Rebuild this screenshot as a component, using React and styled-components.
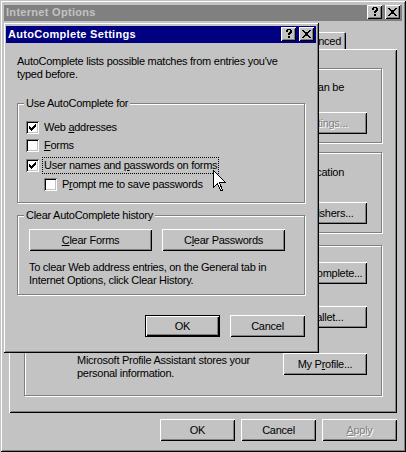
import React from "react";
import styled, { createGlobalStyle, css } from "styled-components";

const GlobalStyle = createGlobalStyle`
  body {
    margin: 0;
    background: #c0c0c0;
    overflow: hidden;
  }
  * {
    box-sizing: border-box;
  }
`;

const face = "#c3c3c3";
const shadow = "#808080";

const raised = css`
  box-shadow: inset 1px 1px 0 #fff, inset -1px -1px 0 #000,
    inset 2px 2px 0 ${face}, inset -2px -2px 0 ${shadow};
`;

const frame = css`
  box-shadow: inset 1px 1px 0 ${face}, inset -1px -1px 0 #000,
    inset 2px 2px 0 #fff, inset -2px -2px 0 ${shadow};
`;

const etched = css`
  border: 1px solid ${shadow};
  box-shadow: inset 1px 1px 0 #fff, 1px 1px 0 #fff;
`;

const Window = styled.div`
  position: relative;
  width: 406px;
  height: 452px;
  padding: 5px 4px 4px;
  background: ${face};
  color: #000;
  font-family: "Liberation Sans", Arial, sans-serif;
  font-size: 11px;
  line-height: 13px;
  letter-spacing: -0.27px;
  overflow: hidden;
  ${frame}
`;

const Dialog = styled.div`
  position: absolute;
  left: 3px;
  top: 22px;
  width: 316px;
  height: 331px;
  padding: 4px 3px 3px;
  background: ${face};
  ${frame}
`;

const TitleBar = styled.div`
  display: flex;
  align-items: flex-start;
  height: ${(p) => (p.$active ? "17px" : "16px")};
  padding: ${(p) => (p.$active ? "1px" : "0")} 2px 0 2px;
  gap: 3px;
  background: ${(p) => (p.$active ? "#000080" : shadow)};
  color: ${(p) => (p.$active ? "#fff" : face)};
  font-size: 11px;
  font-weight: bold;
  letter-spacing: 0.3px;
`;

const TitleText = styled.div`
  flex: 1;
  align-self: center;
  padding-bottom: 2px;
`;

const CaptionButton = styled.div`
  display: flex;
  align-items: center;
  justify-content: center;
  width: 15px;
  height: 14px;
  background: ${face};
  ${raised}
`;

const TabStrip = styled.div`
  display: flex;
  justify-content: flex-end;
  height: 17px;
  margin-top: 11px;
  padding-right: 56px;
`;

const Tab = styled.div`
  padding: 3px 5px 0 6px;
  background: ${face};
  border-radius: 2px 2px 0 0;
  box-shadow: inset 1px 1px 0 #fff, inset -1px 0 0 #000, inset -2px 0 0 ${shadow};
`;

const TabPage = styled.div`
  display: flex;
  flex-direction: column;
  width: 388px;
  height: 364px;
  margin-left: 5px;
  padding: 19px 15px 0;
  ${raised}
`;

const Group = styled.section`
  height: ${(p) => p.$height}px;
  margin-top: ${(p) => p.$gap || 0}px;
  padding: ${(p) => p.$top}px 14px 0 52px;
  ${etched}
`;

const CutLine = styled.div`
  margin-right: 23px;
  text-align: right;
`;

const ButtonRow = styled.div`
  display: flex;
  justify-content: flex-end;
  margin-top: ${(p) => p.$top || 0}px;
`;

const ProfileRow = styled.div`
  display: flex;
  justify-content: space-between;
  margin-top: 25px;
`;

const ProfileText = styled.div`
  padding-top: 1px;
`;

const Button = styled.div`
  flex-shrink: 0;
  width: ${(p) => p.$width}px;
  height: 22px;
  line-height: 22px;
  text-align: center;
  background: ${face};
  ${(p) =>
    p.$default
      ? css`
          box-shadow: inset 0 0 0 1px #000, inset 2px 2px 0 #fff,
            inset -2px -2px 0 #000, inset -3px -3px 0 ${shadow};
        `
      : raised}
  ${(p) =>
    p.$disabled &&
    css`
      color: ${shadow};
      text-shadow: 1px 1px 0 #fff;
    `}
`;

const PageButtons = styled.div`
  display: flex;
  justify-content: flex-end;
  gap: 6px;
  margin: 6px 5px 0 0;
`;

const DialogBody = styled.div`
  display: flex;
  flex-direction: column;
  padding: 12px 11px 0;
`;

const Intro = styled.p`
  margin: 0 0 16px;
`;

const DialogGroup = styled.fieldset`
  height: ${(p) => p.$height}px;
  margin: 0 0 ${(p) => p.$after || 0}px;
  padding: 0 12px 0 8px;
  min-width: 0;
  ${etched}
`;

const Legend = styled.legend`
  margin-left: -2px;
  padding: 0 2px;
  background: ${face};
`;

const CheckRow = styled.div`
  display: flex;
  align-items: center;
  height: 13px;
  gap: 5px;
  margin-top: ${(p) => p.$top}px;
  margin-left: ${(p) => p.$indent || 0}px;
`;

const CheckBox = styled.div`
  display: flex;
  align-items: center;
  justify-content: center;
  flex-shrink: 0;
  width: 13px;
  height: 13px;
  background: #fff;
  box-shadow: inset 1px 1px 0 ${shadow}, inset -1px -1px 0 #fff,
    inset 2px 2px 0 #000, inset -2px -2px 0 ${face};
`;

const FocusLabel = styled.span`
  display: block;
  margin-left: -1px;
  padding: 1px;
  outline: 1px dotted #000;
`;

const ClearButtons = styled.div`
  display: flex;
  gap: 10px;
  margin-top: 7px;
  padding-left: 3px;
`;

const Note = styled.p`
  margin: 10px 0 0 3px;
`;

const DialogActions = styled.div`
  display: flex;
  justify-content: flex-end;
  gap: 10px;
  margin-top: 20px;
`;

const Pointer = styled.svg`
  position: absolute;
  left: 213px;
  top: 170px;
`;

const Help = () => (
  <svg width="8" height="10" viewBox="0 0 8 10" shapeRendering="crispEdges">
    <path d="M1 1h1v-1h4v1h1v3h-1v1h-1v1h-2v-2h1v-1h1v-2h-2v2h-2zM3 7h2v2h-2z" fill="#000" />
  </svg>
);

const Close = () => (
  <svg width="9" height="8" viewBox="0 0 9 8" shapeRendering="crispEdges">
    <path d="M0 0h2v1h1v1h3v-1h1v-1h2v1h-1v1h-1v1h-1v2h1v1h1v1h1v1h-2v-1h-1v-1h-3v1h-1v1h-2v-1h1v-1h1v-1h1v-2h-1v-1h-1v-1h-1z" fill="#000" />
  </svg>
);

const Check = () => (
  <svg width="7" height="7" viewBox="0 0 7 7" shapeRendering="crispEdges">
    <path d="M6 0h1v3h-1v1h-1v1h-1v1h-1v1h-1v-1h-1v-1h-1v-3h1v1h1v1h1v-1h1v-1h1v-1h1z" fill="#000" />
  </svg>
);

const Caption = ({ active, children }) => (
  <TitleBar $active={active}>
    <TitleText>{children}</TitleText>
    <CaptionButton><Help /></CaptionButton>
    <CaptionButton><Close /></CaptionButton>
  </TitleBar>
);

const Option = ({ checked, top, indent, children }) => (
  <CheckRow $top={top} $indent={indent}>
    <CheckBox>{checked && <Check />}</CheckBox>
    <span>{children}</span>
  </CheckRow>
);

export default function App() {
  return (
    <>
      <GlobalStyle />
      <Window>
        <Caption>Internet Options</Caption>
        <TabStrip>
          <Tab>Advanced</Tab>
        </TabStrip>
        <TabPage>
          <Group $height={75} $top={12}>
            <CutLine>can be</CutLine>
            <ButtonRow $top={18}>
              <Button $width={84} $disabled>Settings...</Button>
            </ButtonRow>
          </Group>
          <Group $height={81} $gap={9} $top={13}>
            <CutLine>certification</CutLine>
            <ButtonRow $top={23}>
              <Button $width={84}>Publishers...</Button>
            </ButtonRow>
          </Group>
          <Group $height={151} $gap={12} $top={16}>
            <ButtonRow>
              <Button $width={84}>AutoComplete...</Button>
            </ButtonRow>
            <ButtonRow $top={22}>
              <Button $width={84}>Wallet...</Button>
            </ButtonRow>
            <ProfileRow>
              <ProfileText>
                Microsoft Profile Assistant stores your
                <br />
                personal information.
              </ProfileText>
              <Button $width={84}>My P<u>r</u>ofile...</Button>
            </ProfileRow>
          </Group>
        </TabPage>
        <PageButtons>
          <Button $width={75}>OK</Button>
          <Button $width={75}>Cancel</Button>
          <Button $width={75} $disabled><u>A</u>pply</Button>
        </PageButtons>

        <Dialog>
          <Caption active>AutoComplete Settings</Caption>
          <DialogBody>
            <Intro>
              AutoComplete lists possible matches from entries you've
              <br />
              typed before.
            </Intro>
            <DialogGroup $height={106} $after={6}>
              <Legend>Use AutoComplete for</Legend>
              <Option checked top={11}>Web <u>a</u>ddresses</Option>
              <Option top={5}><u>F</u>orms</Option>
              <Option checked top={7}>
                <FocusLabel>User names and <u>p</u>asswords on forms</FocusLabel>
              </Option>
              <Option top={6} indent={18}>P<u>r</u>ompt me to save passwords</Option>
            </DialogGroup>
            <DialogGroup $height={86}>
              <Legend>Clear AutoComplete history</Legend>
              <ClearButtons>
                <Button $width={123}><u>C</u>lear Forms</Button>
                <Button $width={123}>C<u>l</u>ear Passwords</Button>
              </ClearButtons>
              <Note>
                To clear Web address entries, on the General tab in
                <br />
                Internet Options, click Clear History.
              </Note>
            </DialogGroup>
            <DialogActions>
              <Button $width={75} $default>OK</Button>
              <Button $width={75}>Cancel</Button>
            </DialogActions>
          </DialogBody>
        </Dialog>

        <Pointer width="13" height="21" viewBox="0 0 13 21" shapeRendering="crispEdges">
          <path
            d="M0.5 0.5V17.5L4.5 13.5L7.5 20.5H9.5L6.5 12.5H12.5Z"
            fill="#fff"
            stroke="#000"
          />
        </Pointer>
      </Window>
    </>
  );
}
